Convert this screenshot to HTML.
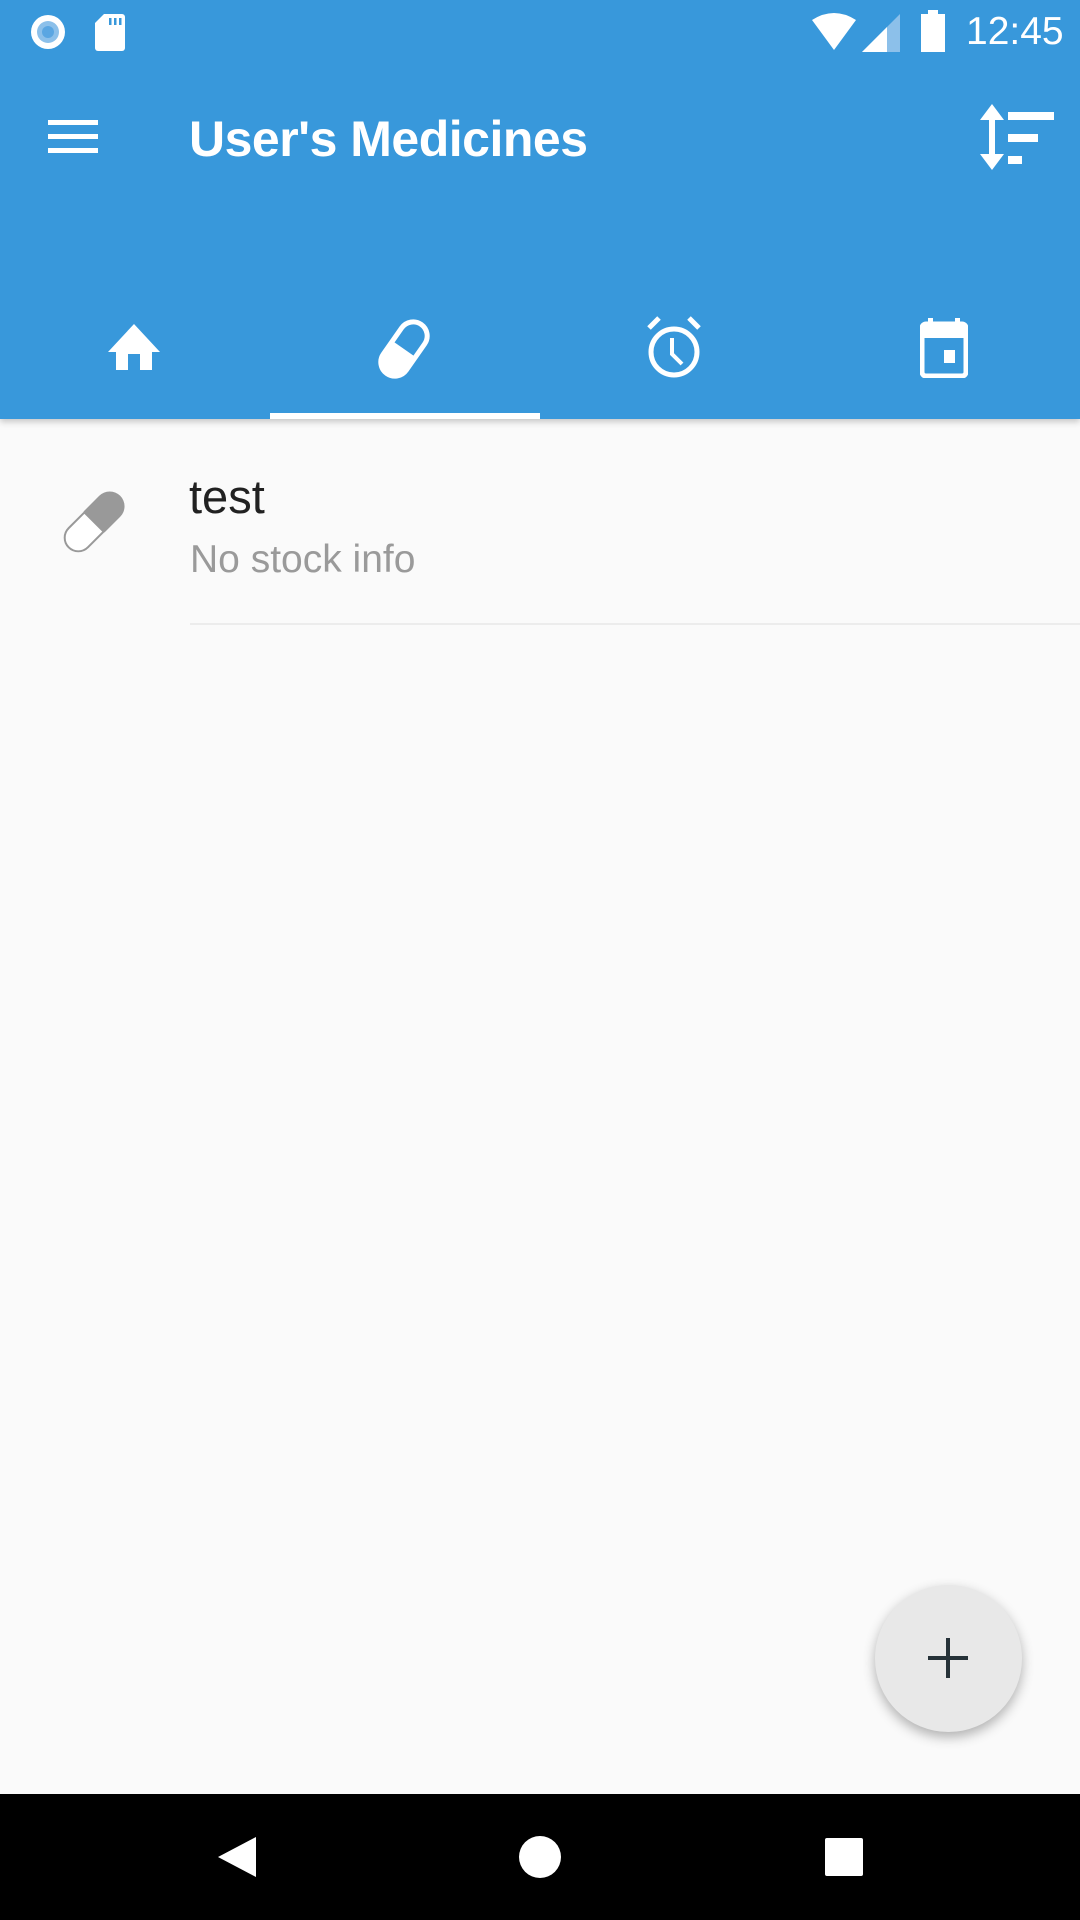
<!DOCTYPE html>
<html><head><meta charset="utf-8"><style>
*{margin:0;padding:0;box-sizing:border-box}
body{width:1080px;height:1920px;background:#fafafa;font-family:"Liberation Sans",sans-serif;position:relative;overflow:hidden}
.bar{position:absolute;left:0;top:0;width:1080px;height:419px;background:#3898db;box-shadow:0 3px 6px rgba(0,0,0,.2)}
.a{position:absolute}
</style></head><body>
<div class="bar">
  <svg class="a" style="left:28px;top:12px" width="40" height="40" viewBox="0 0 40 40"><circle cx="20" cy="20" r="17" fill="#fff"/><circle cx="20" cy="20" r="11" fill="#8cc0ea"/><circle cx="20" cy="20" r="6" fill="#5aa6e2"/></svg>
  <svg class="a" style="left:94px;top:12px" width="32" height="40" viewBox="0 0 32 40"><path d="M10 2H28a3 3 0 0 1 3 3V36a3 3 0 0 1-3 3H4a3 3 0 0 1-3-3V11z" fill="#fff"/><rect x="15" y="6" width="2.5" height="7" fill="#3898db"/><rect x="20" y="6" width="2.5" height="7" fill="#3898db"/><rect x="25" y="6" width="2.5" height="7" fill="#3898db"/></svg>
  <svg class="a" style="left:810px;top:12px" width="48" height="40" viewBox="0 0 48 40"><path d="M2 8Q24-6 46 8L24 38Z" fill="#fff"/></svg>
  <svg class="a" style="left:862px;top:12px" width="40" height="40" viewBox="0 0 40 40"><path d="M38 2V40H0Z" fill="#8cc0ea"/><path d="M25 15V40H0Z" fill="#fff"/></svg>
  <svg class="a" style="left:920px;top:10px" width="26" height="42" viewBox="0 0 26 42"><rect x="8" y="0" width="10" height="5" fill="#fff"/><rect x="1" y="4" width="24" height="38" fill="#fff"/></svg>
  <div class="a" style="left:966px;top:8px;color:#fff;font-size:39px;line-height:48px">12:45</div>
  <svg class="a" style="left:48px;top:118px" width="50" height="38" viewBox="0 0 50 38"><rect y="2" width="50" height="5" fill="#fff"/><rect y="16" width="50" height="5" fill="#fff"/><rect y="30" width="50" height="5" fill="#fff"/></svg>
  <div class="a" style="left:189px;top:107px;color:#fff;font-size:50px;font-weight:bold;line-height:64px;letter-spacing:-0.5px">User's Medicines</div>
  <svg class="a" style="left:978px;top:104px" width="78" height="66" viewBox="0 0 78 66"><path d="M14 0L2 16H11V50H2L14 66L26 50H17V16H26Z" fill="#fff"/><rect x="30" y="8" width="46" height="8" fill="#fff"/><rect x="30" y="30" width="30" height="8" fill="#fff"/><rect x="30" y="52" width="14" height="8" fill="#fff"/></svg>
  <svg class="a" style="left:108px;top:322px" width="52" height="50" viewBox="0 0 52 50"><path d="M26 2L52 30H44V48H32V32H20V48H8V30H0Z" fill="#fff"/></svg>
  <svg class="a" style="left:373px;top:318px" width="62" height="62" viewBox="0 0 62 62"><g transform="rotate(-55 31 31)"><rect x="1" y="17" width="60" height="28" rx="14" fill="none" stroke="#fff" stroke-width="5"/><path d="M15 17h16v28h-16a14 14 0 0 1 0-28z" fill="#fff"/></g></svg>
  <svg class="a" style="left:645px;top:316px" width="58" height="64" viewBox="0 0 58 64"><circle cx="29" cy="36" r="23" fill="none" stroke="#fff" stroke-width="5"/><path d="M27 22V38L37 48" fill="none" stroke="#fff" stroke-width="4"/><path d="M4 12L14 2M54 12L44 2" stroke="#fff" stroke-width="5"/></svg>
  <svg class="a" style="left:920px;top:318px" width="48" height="60" viewBox="0 0 48 60"><rect x="8" y="0" width="5" height="8" fill="#fff"/><rect x="35" y="0" width="5" height="8" fill="#fff"/><rect x="2" y="6" width="44" height="52" rx="4" fill="none" stroke="#fff" stroke-width="5"/><rect x="2" y="6" width="44" height="14" fill="#fff"/><rect x="24" y="32" width="11" height="13" fill="#fff"/></svg>
  <div class="a" style="left:270px;top:413px;width:270px;height:6px;background:#fff"></div>
</div>
<svg class="a" style="left:52px;top:480px" width="84" height="84" viewBox="0 0 68 68"><g transform="rotate(-45 34 34)"><path d="M34 22H52a12 12 0 0 1 0 24H34Z" fill="#999"/><path d="M34 23H16a11 11 0 0 0 0 22H34Z" fill="#fff" stroke="#999" stroke-width="1.6"/></g></svg>
<div class="a" style="left:189px;top:467px;font-size:47px;color:#212121;line-height:60px">test</div>
<div class="a" style="left:190px;top:534px;font-size:39px;color:#9a9a9a;line-height:52px">No stock info</div>
<div class="a" style="left:190px;top:623px;width:890px;height:2px;background:#ececec"></div>
<div class="a" style="left:875px;top:1585px;width:147px;height:147px;border-radius:50%;background:#e8e8e8;box-shadow:0 5px 12px rgba(0,0,0,.3)"></div>
<svg class="a" style="left:928px;top:1638px" width="40" height="40" viewBox="0 0 40 40"><rect x="18" y="0" width="4" height="40" fill="#263238"/><rect x="0" y="18" width="40" height="4" fill="#263238"/></svg>
<div class="a" style="left:0;top:1794px;width:1080px;height:126px;background:#000"></div>
<svg class="a" style="left:216px;top:1835px" width="42" height="44" viewBox="0 0 42 44"><path d="M40 2V42L2 22Z" fill="#fff"/></svg>
<div class="a" style="left:519px;top:1836px;width:42px;height:42px;border-radius:50%;background:#fff"></div>
<div class="a" style="left:825px;top:1838px;width:38px;height:38px;background:#fff;border-radius:2px"></div>
</body></html>
